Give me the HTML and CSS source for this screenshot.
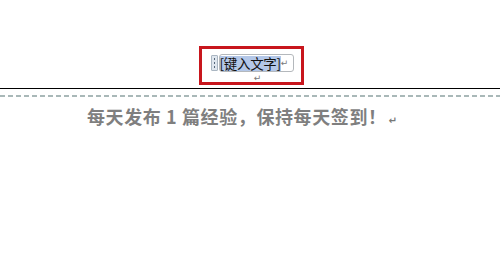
FILE: index.html
```html
<!DOCTYPE html>
<html>
<head>
<meta charset="utf-8">
<link rel="stylesheet" href="styles.css">
</head>
<body>
<div class="header">
  <div class="frame">
    <div class="row">
      <span class="handle"><i></i><i></i><i></i></span>
      <span class="control"><span class="sel">[键入文字]</span><span class="mark">↵</span></span>
    </div>
    <div class="mark small">↵</div>
  </div>
</div>
<div class="rule"></div>
<div class="dash"></div>
<p class="body-text">每天发布 1 篇经验，保持每天签到！<span class="mark bm">↵</span></p>
</body>
</html>
```
FILE: styles.css
```css
html, body { margin: 0; padding: 0; background: #fff; }
body { width: 500px; height: 275px; overflow: hidden; font-family: "Noto Sans CJK SC", "Liberation Sans", sans-serif; }
.header { height: 88px; display: flex; justify-content: center; align-items: flex-end; }
.frame {
  border: 3px solid #c8161d; margin: 0 0 3px 2px;
  display: flex; flex-direction: column; align-items: flex-start; padding: 5px 0 0 9px; box-sizing: content-box;
  width: 90px; height: 28px;
}
.row { display: flex; align-items: center; height: 18px; }
.handle {
  width: 5px; height: 14px; background: #dfe6ee; border: 1px solid #aab6c2; border-radius: 1px;
  display: flex; flex-direction: column; justify-content: space-evenly; align-items: center; margin-right: 1px;
}
.handle i { display: block; width: 1px; height: 2px; background: #56677a; }
.control {
  display: flex; align-items: center; height: 16px; padding-right: 5px;
  border: 1px solid #b4b8bc; border-radius: 3px; font-size: 13.5px; line-height: 15px; color: #111;
}
.sel { background: #b3c7e8; height: 15px; letter-spacing: -0.3px; }
.mark { font-family: "DejaVu Sans", sans-serif; font-size: 9px; color: #777; line-height: 10px; }
.small { align-self: center; margin: 1px 0 0 4px; }
.rule { height: 1px; background: #000; }
.dash {
  margin-top: 6px; height: 2px;
  background-image: linear-gradient(to right, #a9b8b8 0 5px, transparent 5px 8px);
  background-size: 8px 2px;
}
.body-text {
  margin: 7px 0 0 87px; font-size: 18px; line-height: 24px; font-weight: bold; color: #7f7f7f; letter-spacing: 0.6px;
}
.bm { margin-left: 2px; font-size: 10px; }
```
